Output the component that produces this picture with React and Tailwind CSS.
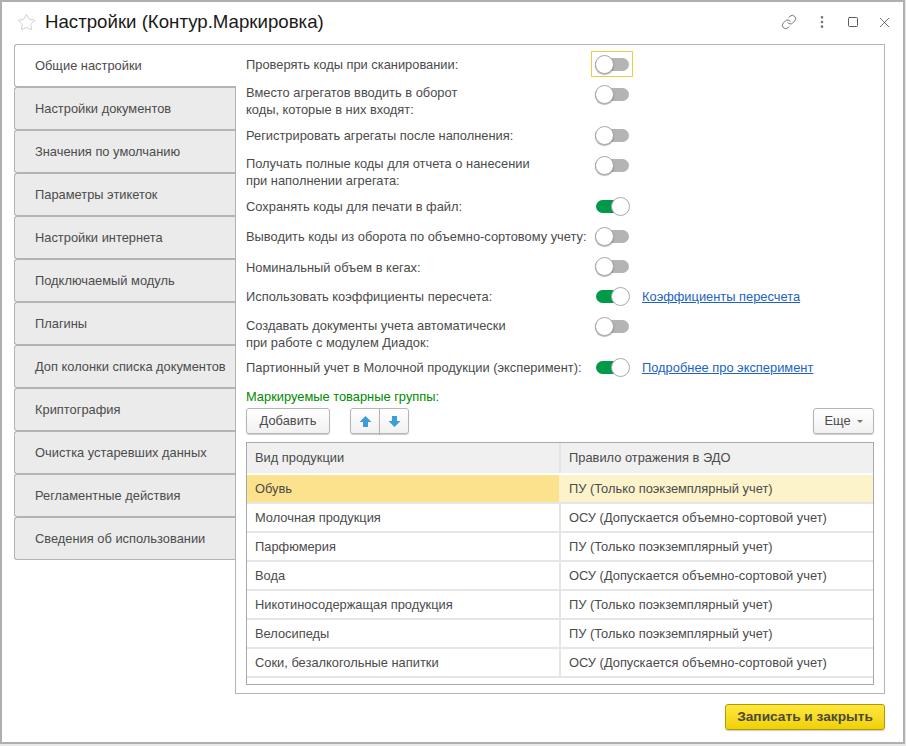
import { Link, MoreVertical, Square, Star, X } from 'lucide-react';

const font = { fontFamily: '"Liberation Sans", Arial, sans-serif' };

const tabs = [
  'Общие настройки',
  'Настройки документов',
  'Значения по умолчанию',
  'Параметры этикеток',
  'Настройки интернета',
  'Подключаемый модуль',
  'Плагины',
  'Доп колонки списка документов',
  'Криптография',
  'Очистка устаревших данных',
  'Регламентные действия',
  'Сведения об использовании',
];

const settings = [
  { lines: ['Проверять коды при сканировании:'], top: 'pt-[5px]', focus: true },
  { lines: ['Вместо агрегатов вводить в оборот', 'коды, которые в них входят:'], top: 'pt-[3px]' },
  { lines: ['Регистрировать агрегаты после наполнения:'], top: 'pt-[5px]' },
  { lines: ['Получать полные коды для отчета о нанесении', 'при наполнении агрегата:'], top: 'pt-[3px]' },
  { lines: ['Сохранять коды для печати в файл:'], top: 'pt-[5px]', on: true },
  { lines: ['Выводить коды из оборота по объемно-сортовому учету:'], top: 'pt-[5px]' },
  { lines: ['Номинальный объем в кегах:'], top: 'pt-[6px]' },
  { lines: ['Использовать коэффициенты пересчета:'], top: 'pt-[5px]', on: true, link: 'Коэффициенты пересчета' },
  { lines: ['Создавать документы учета автоматически', 'при работе с модулем Диадок:'], top: 'pt-[4px]' },
  { lines: ['Партионный учет в Молочной продукции (эксперимент):'], top: 'pt-[5px]', on: true, link: 'Подробнее про эксперимент' },
];

const products = [
  ['Обувь', 'ПУ (Только поэкземплярный учет)'],
  ['Молочная продукция', 'ОСУ (Допускается объемно-сортовой учет)'],
  ['Парфюмерия', 'ПУ (Только поэкземплярный учет)'],
  ['Вода', 'ОСУ (Допускается объемно-сортовой учет)'],
  ['Никотиносодержащая продукция', 'ПУ (Только поэкземплярный учет)'],
  ['Велосипеды', 'ПУ (Только поэкземплярный учет)'],
  ['Соки, безалкогольные напитки', 'ОСУ (Допускается объемно-сортовой учет)'],
];

function Toggle({ on, focus }) {
  return (
    <div className={`flex h-[26px] w-[42px] shrink-0 items-center ${focus ? 'border border-[#f5c842]' : 'border border-transparent'}`}>
      {on ? (
        <div className="ml-[4px] flex h-[13px] w-[33px] items-center justify-end rounded-full bg-[#009a4a]">
          <div className="-mr-[1px] h-[19px] w-[19px] shrink-0 rounded-full border border-[#aaaaaa] bg-white" />
        </div>
      ) : (
        <div className="ml-[3px] flex h-[13px] w-[34px] items-center rounded-full bg-[#b4b4b4]">
          <div className="h-[19px] w-[19px] shrink-0 rounded-full border border-[#aaaaaa] bg-white shadow-[0_1px_1px_rgba(0,0,0,0.3)]" />
        </div>
      )}
    </div>
  );
}

function SettingRow({ item }) {
  const tall = item.lines.length > 1;
  return (
    <div className={`flex items-start ${tall ? 'h-[41px]' : 'h-[30px]'}`}>
      <div className={`w-[345px] shrink-0 text-[12.87px] leading-[17px] text-[#4b4b4b] ${item.top}`}>
        {item.lines.map((line) => (
          <div key={line} className="whitespace-nowrap">{line}</div>
        ))}
      </div>
      <Toggle on={item.on} focus={item.focus} />
      {item.link && (
        <a className="ml-[9px] pt-[5px] text-[12.87px] leading-[17px] whitespace-nowrap text-[#1d62c4] underline">{item.link}</a>
      )}
    </div>
  );
}

function ArrowIcon({ down }) {
  return (
    <svg width="13" height="13" viewBox="0 0 13 13" className={down ? 'rotate-180' : ''}>
      <path d="M6.5 1 L12.5 7 H9 V12 H4 V7 H0.5 Z" fill="#3b9ddd" />
    </svg>
  );
}

const buttonClass = 'h-[26px] rounded-[3px] border border-[#b5b5b5] bg-gradient-to-b from-white to-[#f1f1f1] shadow-[0_1px_1px_rgba(0,0,0,0.2)] text-[12.87px] text-[#4b4b4b]';

export default function App() {
  return (
    <div className="h-[746px] w-[906px] overflow-hidden bg-[#e9e9e9]" style={font}>
      <div className="flex h-[744px] w-[905px] flex-col border-2 border-[#b0b0b0] bg-white pl-[12px] pr-[18px]">
        <div className="flex h-[42px] shrink-0 items-center pb-[2px]">
          <Star size={19} strokeWidth={1} className="ml-[3px] text-[#c4c4c4]" />
          <h1 className="ml-[9px] text-[18.67px] font-normal text-[#1a1a1a]">Настройки (Контур.Маркировка)</h1>
          <div className="ml-auto flex items-center text-[#555555]">
            <Link size={16} strokeWidth={1.2} />
            <MoreVertical size={16} strokeWidth={2} className="ml-[17px] text-[#777777]" />
            <Square size={12} strokeWidth={1.6} className="ml-[17px] text-[#333333]" />
            <X size={17} strokeWidth={1.2} className="ml-[17px] -mr-[8px]" />
          </div>
        </div>

        <div className="flex h-[650px] shrink-0">
          <div className="w-[221px] shrink-0">
            {tabs.map((tab, i) => (
              <div
                key={tab}
                className={`flex h-[43px] items-center rounded-l-[3px] border border-r-0 border-[#b3b3b3] pl-[20px] text-[12.87px] whitespace-nowrap text-[#4b4b4b] ${i === 0 ? 'relative z-10 w-[222px] bg-white' : 'bg-[#ebebeb]'}`}
              >
                {tab}
              </div>
            ))}
          </div>

          <div className="w-[650px] shrink-0 border border-[#b3b3b3] px-[10px] pt-[6px]">
            {settings.map((item) => (
              <SettingRow key={item.lines[0]} item={item} />
            ))}

            <div className="mt-[4px] text-[12.87px] leading-[17px] text-[#008a00]">Маркируемые товарные группы:</div>
            <div className="mt-[3px] flex items-center">
              <button className={`${buttonClass} w-[84px]`}>Добавить</button>
              <div className="ml-[20px] flex">
                <button className={`${buttonClass} flex w-[30px] items-center justify-center rounded-r-none`}>
                  <ArrowIcon />
                </button>
                <button className={`${buttonClass} -ml-[1px] flex w-[30px] items-center justify-center rounded-l-none`}>
                  <ArrowIcon down />
                </button>
              </div>
              <button className={`${buttonClass} ml-auto flex w-[61px] items-center justify-center gap-[6px]`}>
                Еще
                <span className="h-0 w-0 border-x-[3px] border-t-[3px] border-x-transparent border-t-[#777777]" />
              </button>
            </div>

            <div className="mt-[8px] h-[243px] w-[628px] border border-[#a9a9a9]">
              <div className="flex h-[32px] border-b-2 border-white bg-[#f0f0f0] text-[12.87px] text-[#4b4b4b]">
                <div className="flex w-[314px] items-center border-r-2 border-[#e3e3e3] pl-[8px]">Вид продукции</div>
                <div className="flex flex-1 items-center pl-[8px]">Правило отражения в ЭДО</div>
              </div>
              {products.map(([name, rule], i) => (
                <div key={name} className="flex h-[29px] border-b-2 border-[#e6e6e6] text-[12.87px] text-[#4b4b4b]">
                  <div className={`flex w-[314px] items-center border-r-2 pl-[8px] ${i === 0 ? 'border-[#fdf3cb] bg-[#fde28d]' : 'border-[#e6e6e6]'}`}>{name}</div>
                  <div className={`flex flex-1 items-center pl-[8px] ${i === 0 ? 'bg-[#fdf3cb]' : ''}`}>{rule}</div>
                </div>
              ))}
            </div>
          </div>
        </div>

        <div className="flex flex-1 items-start justify-end pt-[10px]">
          <button className="h-[26px] w-[160px] rounded-[3px] border border-[#b09a00] bg-gradient-to-b from-[#ffe83a] to-[#f0d000] text-[13.7px] font-bold text-[#4a4a3a] shadow-[0_1px_1px_rgba(0,0,0,0.2)]">
            Записать и закрыть
          </button>
        </div>
      </div>
    </div>
  );
}
